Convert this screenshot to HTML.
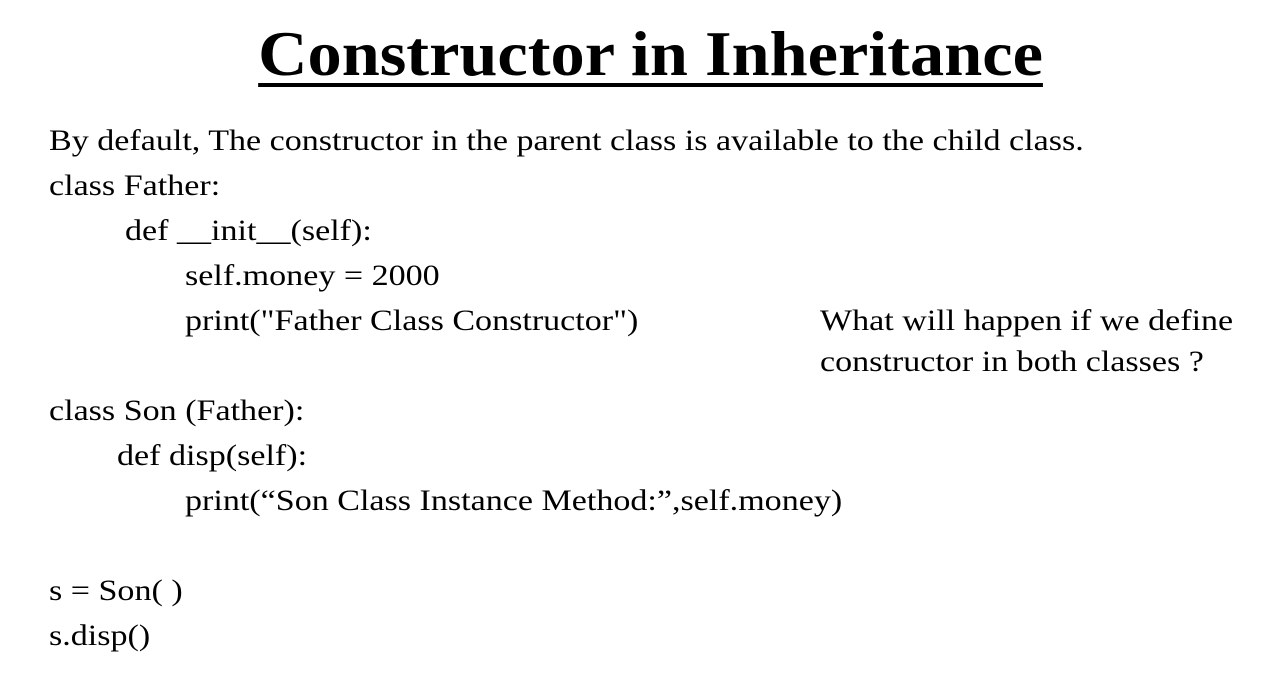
<!DOCTYPE html>
<html><head><style>
body{margin:0;width:1261px;height:689px;background:#fff;overflow:hidden;position:relative;font-family:"Liberation Serif",serif;color:#000}
.t{position:absolute;white-space:pre;font-size:30px;line-height:1;transform:scaleX(1.135);transform-origin:0 0}
h1{position:absolute;left:0;width:1301px;text-align:center;top:22px;margin:0;font-size:64px;font-weight:bold;text-decoration:underline;text-decoration-thickness:4px;text-underline-offset:8px;line-height:1;transform:scaleX(1.068);transform-origin:650px 0}
</style></head><body>
<h1>Constructor in Inheritance</h1>
<div class="t" style="left:49px;top:126px">By default, The constructor in the parent class is available to the child class.</div>
<div class="t" style="left:49px;top:171px">class Father:</div>
<div class="t" style="left:125px;top:216px">def __init__(self):</div>
<div class="t" style="left:185px;top:261px">self.money = 2000</div>
<div class="t" style="left:185px;top:306px">print("Father Class Constructor")</div>
<div class="t" style="left:820px;top:306px">What will happen if we define</div>
<div class="t" style="left:820px;top:347px">constructor in both classes ?</div>
<div class="t" style="left:49px;top:396px">class Son (Father):</div>
<div class="t" style="left:117px;top:441px">def disp(self):</div>
<div class="t" style="left:185px;top:486px">print(“Son Class Instance Method:”,self.money)</div>
<div class="t" style="left:49px;top:576px">s = Son( )</div>
<div class="t" style="left:49px;top:621px">s.disp()</div>
</body></html>
